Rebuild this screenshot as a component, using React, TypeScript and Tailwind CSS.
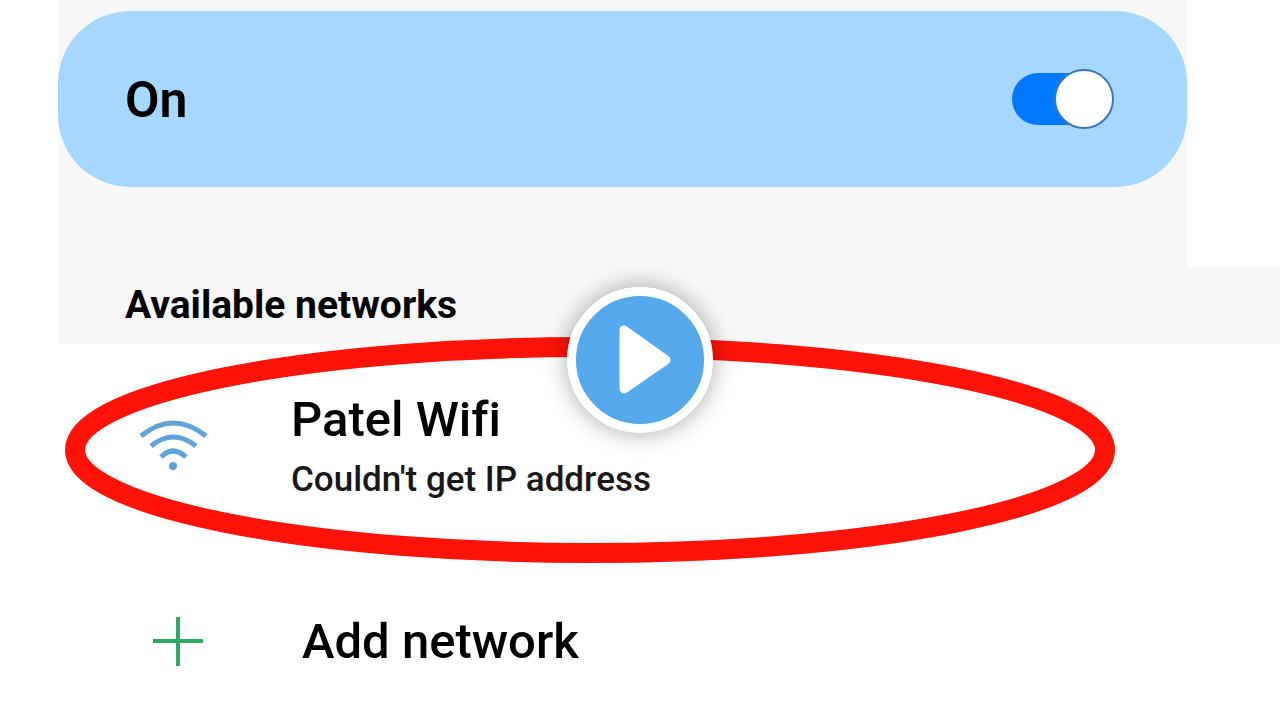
import { useState } from 'react';

export default function App() {
  const [wifiOn, setWifiOn] = useState(true);

  return (
    <div className="relative min-h-screen overflow-hidden bg-white font-['Roboto',sans-serif] text-black">
      {/* Wi-Fi switch */}
      <header className="ml-[58px]">
        <div className="mr-[93px] bg-[#f7f7f7] pt-[11px] pb-20">
          <div className="flex h-44 items-center justify-between rounded-[72px] bg-[#a6d8ff] pr-[73px] pl-[67px]">
            <label htmlFor="wifi" className="pt-0.5 text-[50px] leading-[60px] font-semibold">
              On
            </label>
            <input
              id="wifi"
              type="checkbox"
              role="switch"
              checked={wifiOn}
              onChange={(e) => setWifiOn(e.target.checked)}
              className="relative h-[60px] w-[102px] cursor-pointer appearance-none before:absolute before:top-1 before:left-0 before:h-[52px] before:w-[92px] before:rounded-full before:bg-gray-400 after:absolute after:top-0 after:left-0 after:size-[60px] after:rounded-full after:border-2 after:border-[#3b78b8] after:bg-white checked:before:bg-[#0078ff] checked:after:left-[42px]"
            />
          </div>
        </div>
        <div className="h-[77px] bg-[#f7f7f7] pt-2 pl-[67px]">
          <h2 className="text-[39px] leading-[60px] font-bold">Available networks</h2>
        </div>
      </header>

      <main>
        {/* Network with the error, circled */}
        <section className="relative">
          <button type="button" className="flex w-full items-center pt-[44px] pb-[84px] pl-[139px] text-left">
            <svg width="70" height="56" viewBox="0 0 70 56" fill="none" stroke="#5fa3d8" strokeWidth="5" aria-hidden="true">
              <path d="M2 16 Q34 -10 67 16" />
              <path d="M12 26 Q34 8 57 26" />
              <path d="M22 37 Q34 25 47 37" />
              <circle cx="34" cy="46" r="4" fill="#5fa3d8" stroke="none" />
            </svg>
            <span className="ml-[82px] flex flex-col">
              <span className="text-[49px] leading-[64px] font-medium [font-variant-ligatures:none]">Patel Wifi</span>
              <span className="text-[35px] leading-[56px] font-medium text-[#181818]">Couldn't get IP address</span>
            </span>
          </button>
          <svg
            viewBox="0 0 1050 226"
            fill="none"
            preserveAspectRatio="none"
            aria-hidden="true"
            className="pointer-events-none absolute -top-[7px] right-[165px] left-[65px] h-[226px] w-[calc(100%-230px)]"
          >
            <ellipse cx="525" cy="113" rx="515" ry="103" stroke="#ff1208" strokeWidth="20" />
          </svg>
        </section>

        <button type="button" className="flex items-center pl-[152px] text-left">
          <svg width="52" height="52" viewBox="0 0 52 52" stroke="#2fa866" strokeWidth="4" aria-hidden="true">
            <path d="M26 1 V50 M1 25 H51" />
          </svg>
          <span className="ml-[98px] text-[49px] leading-[100px] font-medium">Add network</span>
        </button>
      </main>

      {/* Play button over the page */}
      <button
        type="button"
        aria-label="Play"
        className="absolute inset-0 m-auto flex size-[146px] items-center justify-center rounded-full border-[9px] border-white bg-[#55aaee] shadow-[0_0_24px_rgba(0,0,0,0.35)]"
      >
        <svg width="128" height="128" viewBox="0 0 128 128" aria-hidden="true">
          <path
            d="M48 34 L90 64 L48 93 Z"
            fill="#fff"
            stroke="#fff"
            strokeWidth="9"
            strokeLinejoin="round"
          />
        </svg>
      </button>
    </div>
  );
}
